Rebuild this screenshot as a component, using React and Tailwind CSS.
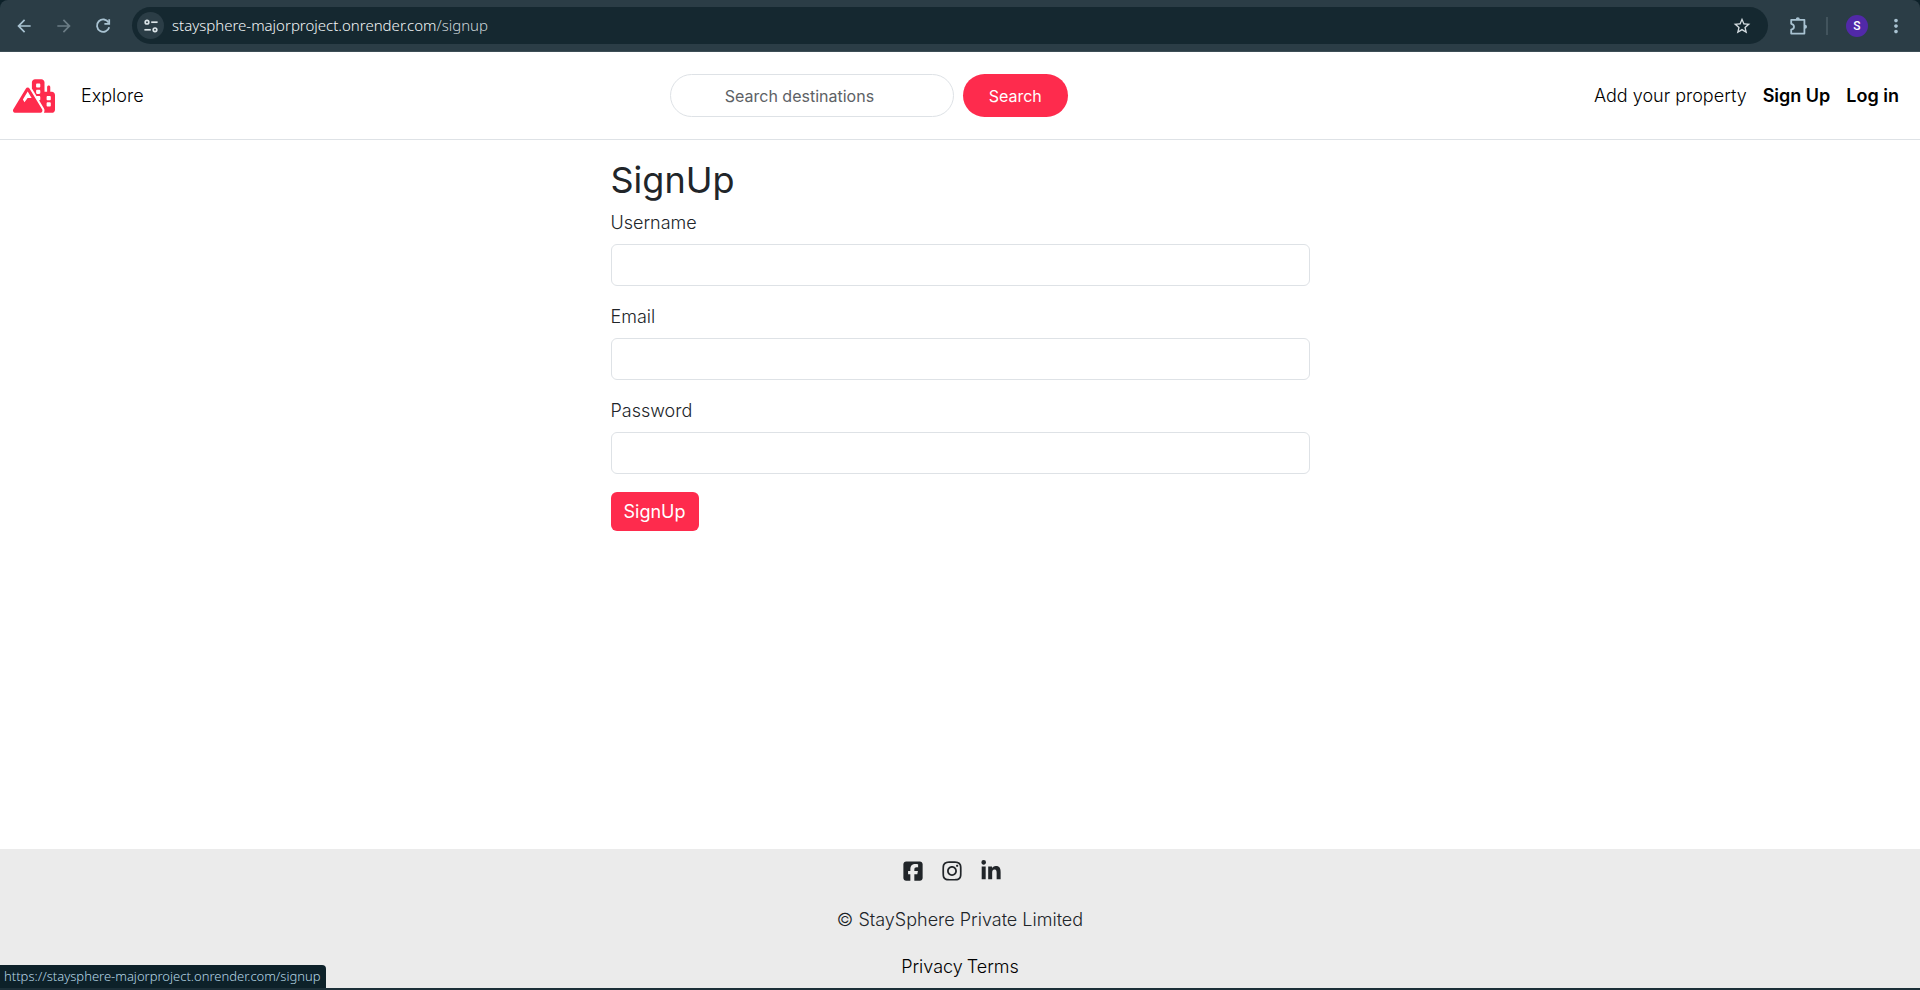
import React from "react";
import { FaMountainCity, FaSquareFacebook, FaInstagram, FaLinkedinIn } from "react-icons/fa6";
import { MdArrowBack, MdArrowForward, MdStarBorder, MdMoreVert } from "react-icons/md";

function ReloadIcon() {
  return (
    <svg viewBox="0 0 20 20" className="size-5" fill="none" stroke="currentColor" strokeWidth="1.8" aria-hidden="true">
      <path d="M15.6 6.6A6.2 6.2 0 1 0 16.2 11.2" />
      <path d="M16.2 3.2V7.9H11.4" />
    </svg>
  );
}

function TuneIcon() {
  return (
    <svg viewBox="0 0 16 16" className="size-4" fill="none" stroke="currentColor" strokeWidth="1.7" aria-hidden="true">
      <circle cx="4" cy="4.2" r="1.8" />
      <path d="M8.2 4.2H14.6" />
      <circle cx="12" cy="11.8" r="1.8" />
      <path d="M1.4 11.8H7.8" />
    </svg>
  );
}

function PuzzleIcon() {
  return (
    <svg viewBox="0 0 20 20" className="size-5" aria-hidden="true">
      <path
        d="M2.2 3.8H15.4V17.6H2.2V13.6C4.2 13.2 5 12.2 5 10.7S4.2 8.2 2.2 7.8Z"
        fill="none"
        stroke="currentColor"
        strokeWidth="1.8"
        strokeLinejoin="round"
      />
      <path d="M6.8 3.2a2 2 0 0 1 4 0zM16 8.7a2 2 0 0 1 0 4z" fill="currentColor" />
    </svg>
  );
}

function BrowserBar() {
  return (
    <div className="bg-[#0d2129]">
      <div className="flex h-[52px] items-center rounded-t-lg border-b border-[#3d4e56] bg-[#2b3d46] pl-3 pr-3 text-[#a9c3d2]">
        <button type="button" aria-label="Back" className="flex w-6 justify-center">
          <MdArrowBack className="size-5" />
        </button>
        <button type="button" aria-label="Forward" className="ml-4 flex w-6 justify-center text-[#6b7c85]">
          <MdArrowForward className="size-5" />
        </button>
        <button type="button" aria-label="Reload" className="ml-[15px] flex w-6 justify-center">
          <ReloadIcon />
        </button>
        <div className="ml-[17px] flex h-[37px] flex-1 items-center rounded-full bg-[#152830] pl-[5px] pr-4">
          <button
            type="button"
            aria-label="View site information"
            className="flex size-[27px] items-center justify-center rounded-full bg-[#2b3d46] text-[#dbe4e8]"
          >
            <TuneIcon />
          </button>
          <p className="ml-2 flex-1 font-['Noto_Sans',sans-serif] text-[15px] font-light text-[#f3f6f7]">
            staysphere-majorproject.onrender.com<span className="text-[#ccd5d9]">/signup</span>
          </p>
          <button type="button" aria-label="Bookmark this tab" className="text-[#d4dce0]">
            <MdStarBorder className="size-5" />
          </button>
        </div>
        <button type="button" aria-label="Extensions" className="ml-[21px]">
          <PuzzleIcon />
        </button>
        <span className="ml-[17px] h-[18px] w-0.5 bg-[#42545d]" />
        <button
          type="button"
          aria-label="Profile"
          className="ml-[18px] flex size-[22px] items-center justify-center rounded-full bg-[#5129a8] font-[Roboto,sans-serif] text-xs font-medium text-white"
        >
          S
        </button>
        <button type="button" aria-label="Browser menu" className="ml-4 flex w-6 justify-center">
          <MdMoreVert className="size-[22px]" />
        </button>
      </div>
    </div>
  );
}

function Navbar() {
  return (
    <nav className="flex h-[88px] items-center border-b border-[#dee2e6] bg-white px-[13px] text-lg text-black">
      <a href="#home" aria-label="StaySphere home" className="text-[#fe2b4d]">
        <FaMountainCity className="h-[34px] w-[42px]" />
      </a>
      <a href="#explore" className="ml-[18px] px-2">
        Explore
      </a>
      <form role="search" className="mx-auto flex gap-[9px] text-base" onSubmit={(e) => e.preventDefault()}>
        <input
          type="search"
          aria-label="Search destinations"
          placeholder="Search destinations"
          className="h-[43px] w-[284px] rounded-full border border-[#dee2e6] px-[54px] font-normal placeholder:text-[#5d6165]"
        />
        <button type="submit" className="h-[43px] w-[105px] rounded-full bg-[#fe2b4d] font-normal text-white">
          Search
        </button>
      </form>
      <a href="#new" className="px-2">
        Add your property
      </a>
      <a href="#signup" className="px-2 font-semibold">
        Sign Up
      </a>
      <a href="#login" className="px-2 font-semibold">
        Log in
      </a>
    </nav>
  );
}

function Field({ id, label, type }) {
  return (
    <div className="mb-[18px]">
      <label htmlFor={id} className="mb-2 block leading-[26px]">
        {label}
      </label>
      <input id={id} name={id} type={type} className="block h-[42px] w-full rounded-md border border-[#dee2e6] px-3" />
    </div>
  );
}

function SignupForm() {
  return (
    <main className="mx-auto w-full max-w-[699px] flex-1 pt-5">
      <h1 className="mb-2.5 text-4xl leading-10 font-normal">SignUp</h1>
      <form onSubmit={(e) => e.preventDefault()}>
        <Field id="username" label="Username" type="text" />
        <Field id="email" label="Email" type="email" />
        <Field id="password" label="Password" type="password" />
        <button type="submit" className="h-[39px] rounded-md bg-[#fe2b4d] px-[13px] font-normal text-white">
          SignUp
        </button>
      </form>
    </main>
  );
}

function Footer() {
  return (
    <footer className="flex flex-col items-center border-b-2 border-[#1c2f38] bg-[#ebebeb] pt-[11px] pb-2">
      <div className="flex text-[22px]">
        <a href="#facebook" aria-label="Facebook" className="mr-[17px]">
          <FaSquareFacebook />
        </a>
        <a href="#instagram" aria-label="Instagram" className="mr-[17px]">
          <FaInstagram />
        </a>
        <a href="#linkedin" aria-label="LinkedIn" className="mr-[17px]">
          <FaLinkedinIn />
        </a>
      </div>
      <p className="mt-[25px] leading-[26px]">© StaySphere Private Limited</p>
      <p className="mt-[21px] flex gap-1 leading-[26px] text-black">
        <a href="#privacy">Privacy</a>
        <a href="#terms">Terms</a>
      </p>
    </footer>
  );
}

export default function App() {
  return (
    <div className="relative flex min-h-screen flex-col bg-white font-[Inter,sans-serif] text-lg font-light text-[#212529]">
      <BrowserBar />
      <Navbar />
      <SignupForm />
      <Footer />
      <div className="absolute bottom-0.5 left-0 flex h-[23px] items-center rounded-tr bg-[#0d2129] pr-[5px] pl-1 font-['Noto_Sans',sans-serif] text-[13px] font-light text-[#b5d5e4]">
        https://staysphere-majorproject.onrender.com/signup
      </div>
    </div>
  );
}
